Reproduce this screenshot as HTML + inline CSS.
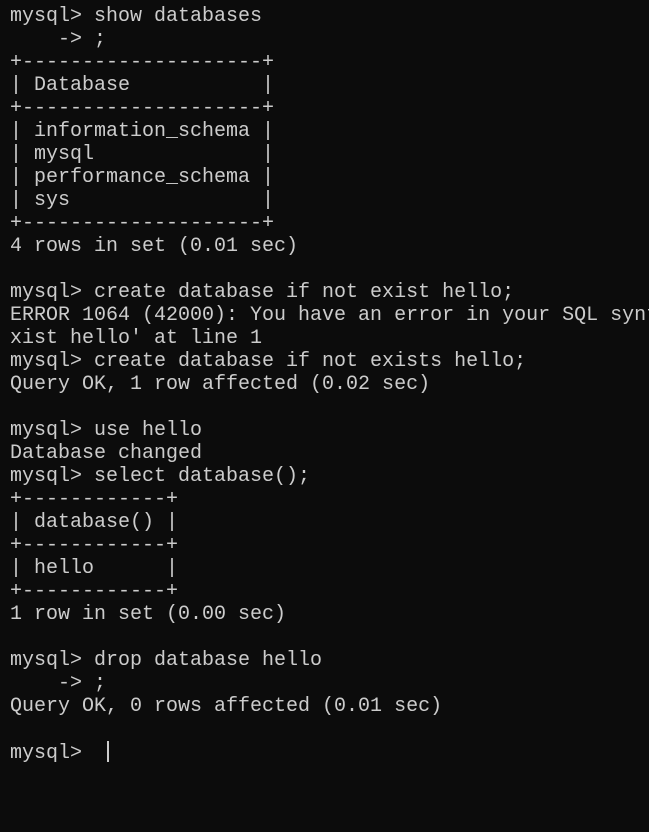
<!DOCTYPE html>
<html><head><meta charset="utf-8"><style>
html,body{margin:0;padding:0;background:#0c0c0c;width:649px;height:832px;overflow:hidden}
pre{margin:0;padding:5px 0 0 10px;width:639px;overflow:hidden;font-family:"Liberation Mono","DejaVu Sans Mono",monospace;font-size:20px;line-height:23px;color:#cccccc;white-space:pre}
.cur{display:inline-block;width:2px;height:21px;background:#cccccc;vertical-align:-4px;margin-left:1px}
</style></head><body><pre>mysql&gt; show databases
    -&gt; ;
+--------------------+
| Database           |
+--------------------+
| information_schema |
| mysql              |
| performance_schema |
| sys                |
+--------------------+
4 rows in set (0.01 sec)

mysql&gt; create database if not exist hello;
ERROR 1064 (42000): You have an error in your SQL syntax
xist hello' at line 1
mysql&gt; create database if not exists hello;
Query OK, 1 row affected (0.02 sec)

mysql&gt; use hello
Database changed
mysql&gt; select database();
+------------+
| database() |
+------------+
| hello      |
+------------+
1 row in set (0.00 sec)

mysql&gt; drop database hello
    -&gt; ;
Query OK, 0 rows affected (0.01 sec)

mysql&gt;  <span class="cur"></span></pre></body></html>
